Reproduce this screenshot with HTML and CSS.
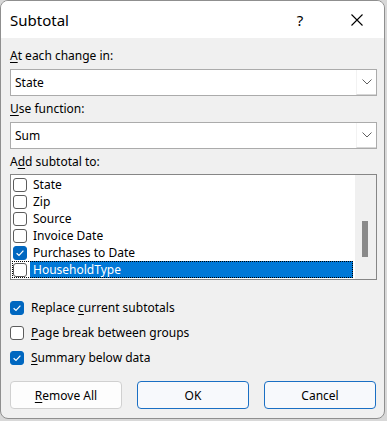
FILE: index.html
```html
<!DOCTYPE html>
<html>
<head>
<meta charset="utf-8">
<link rel="stylesheet" href="styles.css">
</head>
<body>
<div class="window">
  <div class="titlebar">
    <span class="title">Subtotal</span>
    <span class="help">?</span>
    <span class="close"><svg width="12" height="12" viewBox="0 0 12 12"><path d="M0.5 0.5 L11.5 11.5 M11.5 0.5 L0.5 11.5" stroke="#000" stroke-width="1.1" fill="none"/></svg></span>
  </div>
  <div class="content">
    <div class="label"><u>A</u>t each change in:</div>
    <div class="combo">
      <span class="value">State</span>
      <span class="drop"><svg width="10" height="6" viewBox="0 0 10 6"><path d="M0.5 0.5 L5 5 L9.5 0.5" stroke="#5f5f5f" stroke-width="1" fill="none"/></svg></span>
    </div>
    <div class="label"><u>U</u>se function:</div>
    <div class="combo">
      <span class="value">Sum</span>
      <span class="drop"><svg width="10" height="6" viewBox="0 0 10 6"><path d="M0.5 0.5 L5 5 L9.5 0.5" stroke="#5f5f5f" stroke-width="1" fill="none"/></svg></span>
    </div>
    <div class="label last">A<u>d</u>d subtotal to:</div>
    <div class="list">
      <div class="items">
        <div class="row"><span class="box"></span><span class="text">State</span></div>
        <div class="row"><span class="box"></span><span class="text">Zip</span></div>
        <div class="row"><span class="box"></span><span class="text">Source</span></div>
        <div class="row"><span class="box"></span><span class="text">Invoice Date</span></div>
        <div class="row"><span class="box checked"><svg width="14" height="14" viewBox="0 0 14 14"><path d="M3.6 7.2 L6 9.5 L10.4 4.6" stroke="#fff" stroke-width="1.2" fill="none"/></svg></span><span class="text">Purchases to Date</span></div>
        <div class="row selected"><span class="box"></span><span class="text">HouseholdType</span></div>
      </div>
      <div class="scrollbar"><div class="thumb"></div></div>
    </div>
    <div class="options">
      <div class="option"><span class="box checked"><svg width="14" height="14" viewBox="0 0 14 14"><path d="M3.6 7.2 L6 9.5 L10.4 4.6" stroke="#fff" stroke-width="1.2" fill="none"/></svg></span><span>Replace <u>c</u>urrent subtotals</span></div>
      <div class="option"><span class="box"></span><span><u>P</u>age break between groups</span></div>
      <div class="option"><span class="box checked"><svg width="14" height="14" viewBox="0 0 14 14"><path d="M3.6 7.2 L6 9.5 L10.4 4.6" stroke="#fff" stroke-width="1.2" fill="none"/></svg></span><span><u>S</u>ummary below data</span></div>
    </div>
    <div class="buttons">
      <button class="btn"><u>R</u>emove All</button>
      <button class="btn primary">OK</button>
      <button class="btn primary">Cancel</button>
    </div>
  </div>
</div>
</body>
</html>
```
FILE: styles.css
```css
html, body {
  margin: 0;
  padding: 0;
  background: #d8d8d8;
}
.window {
  width: 385px;
  height: 419px;
  box-sizing: border-box;
  border: 1px solid #8f8f8f;
  border-radius: 8px;
  overflow: hidden;
  background: #f0f0f0;
  font-family: "Noto Sans", "Open Sans", sans-serif;
  font-size: 12px;
  color: #000;
}
u {
  text-underline-offset: 2px;
  text-decoration-thickness: 1px;
}
.titlebar {
  height: 37px;
  background: #fff;
  display: flex;
  align-items: center;
  padding: 0 17px 0 9px;
}
.title {
  flex: 1;
  font-size: 15px;
  line-height: 20px;
}
.help {
  width: 20px;
  text-align: center;
  font-size: 15px;
  line-height: 20px;
  margin-right: 37px;
}
.close {
  width: 20px;
  height: 20px;
  display: flex;
  align-items: center;
  justify-content: center;
}
.content {
  padding: 10px 7px 0 9px;
}
.label {
  line-height: 16px;
  margin-bottom: 5px;
}
.label.last {
  margin-bottom: 4px;
}
.combo {
  height: 27px;
  box-sizing: border-box;
  border: 1px solid #ababab;
  background: #fff;
  display: flex;
  margin-bottom: 5px;
}
.combo .value {
  flex: 1;
  padding-left: 4px;
  line-height: 25px;
}
.drop {
  width: 20px;
  box-sizing: border-box;
  border-left: 1px solid #f2f2f2;
  border-bottom: 1px solid #d6d6d6;
  display: flex;
  align-items: center;
  justify-content: center;
}
.list {
  height: 106px;
  box-sizing: border-box;
  border: 1px solid #868686;
  background: #fff;
  display: flex;
}
.items {
  flex: 1;
  padding: 1px 2px 0 1px;
}
.row {
  height: 17px;
  display: flex;
  align-items: center;
  box-sizing: border-box;
}
.row .box {
  margin-left: 1px;
  margin-right: 3px;
}
.row .text {
  flex: 1;
  padding-left: 3px;
  line-height: 17px;
}
.row.selected {
  outline: 1px dotted #000;
  outline-offset: -1px;
}
.row.selected .text {
  background: #0078d7;
  color: #fff;
}
.box {
  width: 14px;
  height: 14px;
  box-sizing: border-box;
  border: 1px solid #5c5c5c;
  border-radius: 3px;
  background: #fff;
  flex: none;
  display: flex;
}
.box.checked {
  background: #0067c0;
  border-color: #0067c0;
}
.box svg {
  margin: -1px;
}
.scrollbar {
  width: 21px;
  background: #f0f0f0;
  padding-top: 46px;
  box-sizing: border-box;
}
.thumb {
  width: 6px;
  height: 36px;
  margin-left: 7px;
  background: #8a8a8a;
}
.options {
  padding-top: 19px;
  display: flex;
  flex-direction: column;
  gap: 8px;
}
.option {
  height: 17px;
  display: flex;
  align-items: center;
  line-height: 17px;
}
.option .box {
  margin-right: 7px;
}
.buttons {
  display: flex;
  gap: 15px;
  margin-top: 15px;
}
.btn {
  width: 112px;
  height: 28px;
  box-sizing: border-box;
  border: 1px solid #d0d0d0;
  border-radius: 4px;
  background: #fdfdfd;
  font-family: "Noto Sans", "Open Sans", sans-serif;
  font-size: 12px;
  color: #000;
  padding: 0;
}
.btn.primary {
  border-color: #1a6fc4;
  background: #f7f9fc;
}
```
